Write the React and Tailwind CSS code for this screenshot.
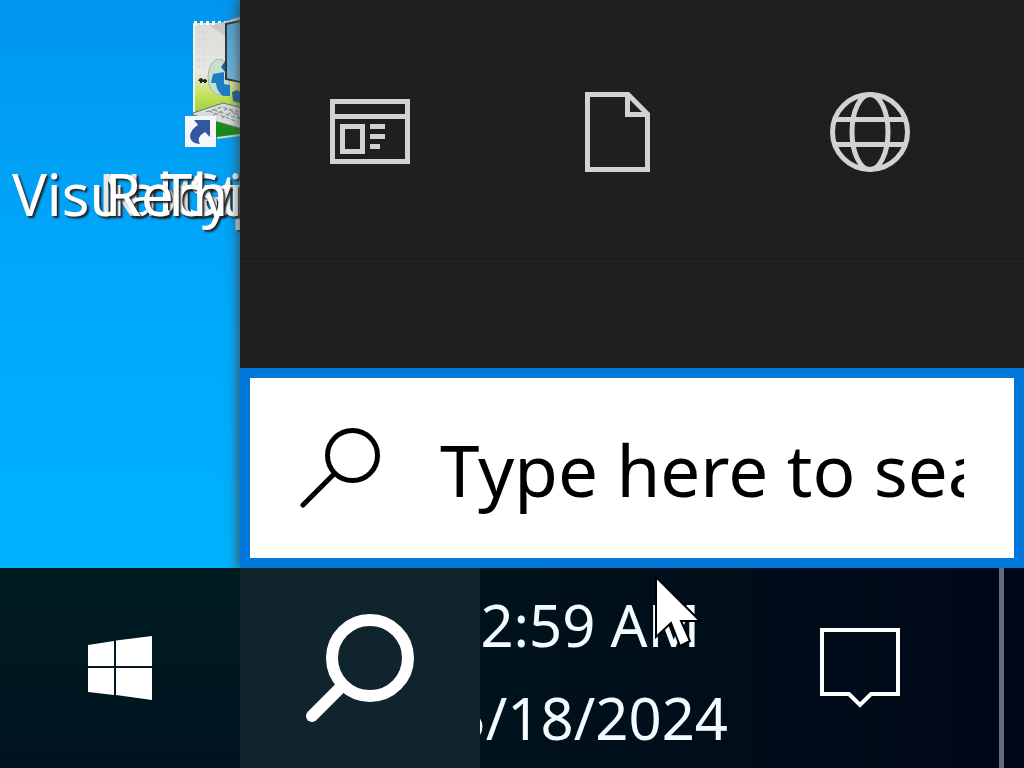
import React from 'react';

const shortcuts = [
    { label: 'Notepad', className: 'left-[98px] text-gray-200' },
    { label: 'Visual Studio', className: 'left-3 text-white' },
    { label: 'Recycle Bin', className: 'left-[105px] text-white' },
    { label: 'This PC', className: 'left-[160px] text-white' },
];

function ShortcutIcon() {
    return (
        <svg viewBox="0 0 70 140" className="absolute left-[180px] top-[10px] h-[140px] w-[70px]" aria-hidden="true">
            <defs>
                <linearGradient id="pad" x1="0" y1="0" x2="0" y2="1">
                    <stop offset="0" stopColor="#dadcd8" />
                    <stop offset="0.45" stopColor="#e8e8e4" />
                    <stop offset="0.65" stopColor="#c5e25a" />
                    <stop offset="1" stopColor="#6dbb1c" />
                </linearGradient>
                <linearGradient id="screen" x1="0" y1="0" x2="1" y2="1">
                    <stop offset="0" stopColor="#4a9fce" />
                    <stop offset="1" stopColor="#8ccbee" />
                </linearGradient>
            </defs>
            <path d="M13 13H70V124L13 108Z" fill="url(#pad)" />
            <path d="M14 13V105" stroke="#edf5e8" strokeWidth="2" />
            <path d="M14 13H48" stroke="#fff" strokeWidth="4" strokeDasharray="3 3" />
            <path d="M18 22H24M18 29H25M18 36H24M18 43H25M18 50H24M18 57H24" stroke="#c4c9c9" strokeDasharray="2 2" />
            <path d="M30 16L50 10L70 3V20L46 26Z" fill="#c8c8c6" />
            <ellipse cx="39" cy="67" rx="11" ry="18" fill="#c7dfcd" stroke="#a2b8a4" />
            <path d="M33 64L44 62V74L50 75V86L43 86Q36 80 36 73L31 73Z" fill="#1d7ec6" />
            <path d="M41 57L46 50V63ZM52 82L57 80L62 83V94L53 91Z" fill="#1665a6" />
            <path d="M19 71Q21 67 23 71H27M21 69V73M25 69V73" stroke="#20281c" strokeWidth="2" fill="none" />
            <path d="M46 14L70 9V74L46 69Z" fill="url(#screen)" stroke="#30363a" strokeWidth="2" />
            <path d="M36 112H60V126L36 128Z" fill="#178b18" />
            <path d="M13 103L43 93L70 100V121L13 105Z" fill="#d9dddd" stroke="#6d7476" />
            <path d="M26 102L42 97L60 102M33 105L47 99L60 105M42 108L52 102L60 108M34 100L60 109M29 101L58 112" stroke="#7e8588" fill="none" strokeDasharray="4 2" />
            <path d="M37 128L60 125" stroke="#cfd7d0" strokeWidth="2" />
            <path d="M5 106H36V137H5Z" fill="#f4f6fb" />
            <path d="M14 110H30V127L25 122Q16 127 20 134Q10 133 10 126Q11 119 18 115Z" fill="#3258a4" />
        </svg>
    );
}

function AppsIcon() {
    return (
        <svg width="80" height="66" viewBox="0 0 80 66" fill="none" stroke="#d2d2d2" strokeWidth="5" aria-hidden="true">
            <path d="M2.5 2.5H77.5V62.5H2.5ZM2.5 17.5H77.5M12.5 27.5H32.5V52.5H12.5ZM40 27.5H55M40 37.5H55M40 47.5H50" />
        </svg>
    );
}

function DocumentIcon() {
    return (
        <svg width="70" height="80" viewBox="0 0 70 80" fill="none" stroke="#d2d2d2" strokeWidth="5" aria-hidden="true">
            <path d="M2.5 2.5H43L62.5 22V77.5H2.5ZM42.5 3V22.5H62" />
        </svg>
    );
}

function GlobeIcon() {
    return (
        <svg width="80" height="80" viewBox="0 0 80 80" fill="none" stroke="#d2d2d2" strokeWidth="5" aria-hidden="true">
            <circle cx="40" cy="40" r="37.5" />
            <ellipse cx="40" cy="40" rx="18" ry="37.5" />
            <path d="M5 27.5H75M5 52.5H75" />
        </svg>
    );
}

const tabs = [
    { name: 'Apps', icon: <AppsIcon /> },
    { name: 'Documents', icon: <DocumentIcon /> },
    { name: 'Web', icon: <GlobeIcon /> },
];

function Desktop() {
    return (
        <div className="relative w-60 shrink-0 overflow-hidden bg-linear-to-b from-[#0096ed] via-[#00a8fb] to-[#00b2ff]">
            <ShortcutIcon />
            {shortcuts.map((item) => (
                <span
                    key={item.label}
                    className={`absolute top-[154px] whitespace-nowrap text-[58px] leading-[80px] [text-shadow:2px_2px_2px_#222] ${item.className}`}
                >
                    {item.label}
                </span>
            ))}
        </div>
    );
}

function SearchPanel() {
    return (
        <section className="z-10 flex min-w-0 flex-1 flex-col bg-[#1f1f1f] shadow-[0_0_12px_1px_#444]">
            <div className="grid h-[262px] shrink-0 grid-cols-3 items-center border-b-2 border-[#232323] pl-[5px] pr-[29px] pt-1">
                {tabs.map((tab) => (
                    <button key={tab.name} aria-label={tab.name} className="flex h-full items-center justify-center">
                        {tab.icon}
                    </button>
                ))}
            </div>
            <div className="flex-1" />
            <label className="flex h-[200px] shrink-0 items-center border-10 border-[#0078d9] bg-white px-[50px]">
                <svg width="80" height="80" viewBox="0 0 80 80" fill="none" stroke="#000" strokeWidth="5" className="shrink-0" aria-hidden="true">
                    <circle cx="52.5" cy="27.5" r="25" />
                    <path d="M34.5 45.5L3 77" strokeLinecap="round" />
                </svg>
                <input
                    type="text"
                    aria-label="Search"
                    placeholder="Type here to search"
                    className="ml-[60px] h-[100px] min-w-0 flex-1 bg-transparent pt-1 text-[71px] text-black outline-none placeholder:text-black"
                />
            </label>
        </section>
    );
}

function Taskbar() {
    return (
        <footer className="relative z-20 flex h-[200px] shrink-0 bg-linear-to-r from-[#001820] via-[#00121c] to-[#000817] text-[#f4fbff]">
            <button aria-label="Start" className="flex w-60 items-center justify-center bg-linear-to-b from-[#001b21] to-[#001420]">
                <svg width="64" height="64" viewBox="0 0 64 64" fill="#fff" aria-hidden="true">
                    <path d="M0 9L26 5V30H0ZM28 4.5L64 0V30H28ZM0 32H26V59L0 56ZM28 32H64V64L28 59Z" />
                </svg>
            </button>
            <button aria-label="Search" className="flex w-60 items-center justify-center bg-[#10242e]">
                <svg width="108" height="108" viewBox="0 0 108 108" fill="none" stroke="#fff" strokeWidth="12" aria-hidden="true">
                    <circle cx="64" cy="44" r="38" />
                    <path d="M36 72L6 102" strokeLinecap="round" />
                </svg>
            </button>
            <button aria-label="Clock" className="flex w-[248px] justify-end overflow-hidden pt-[10px]">
                <time className="block whitespace-nowrap text-center text-[58px] leading-[93px]">
                    <span className="block">2:59 AM</span>
                    <span className="block">5/18/2024</span>
                </time>
            </button>
            <button aria-label="Notifications" className="flex min-w-0 flex-1 items-center justify-center pr-2">
                <svg width="80" height="80" viewBox="0 0 80 80" fill="none" stroke="#fff" strokeWidth="4" aria-hidden="true">
                    <path d="M2 2H78V66H51L40 77L29 66H2Z" />
                </svg>
            </button>
            <button aria-label="Show desktop" className="w-[25px] border-l-5 border-[#646b7b]" />
            <svg viewBox="0 0 50 72" className="absolute left-[655px] top-2 h-[72px] w-[50px]" aria-hidden="true">
                <path d="M1 1V61L16 47L25 70L35 65L26 45H45Z" fill="#fff" stroke="#000" strokeWidth="2" />
            </svg>
        </footer>
    );
}

export default function App() {
    return (
        <main className="flex h-screen flex-col overflow-hidden font-['Noto_Sans',sans-serif]">
            <div className="flex min-h-0 flex-1">
                <Desktop />
                <SearchPanel />
            </div>
            <Taskbar />
        </main>
    );
}
